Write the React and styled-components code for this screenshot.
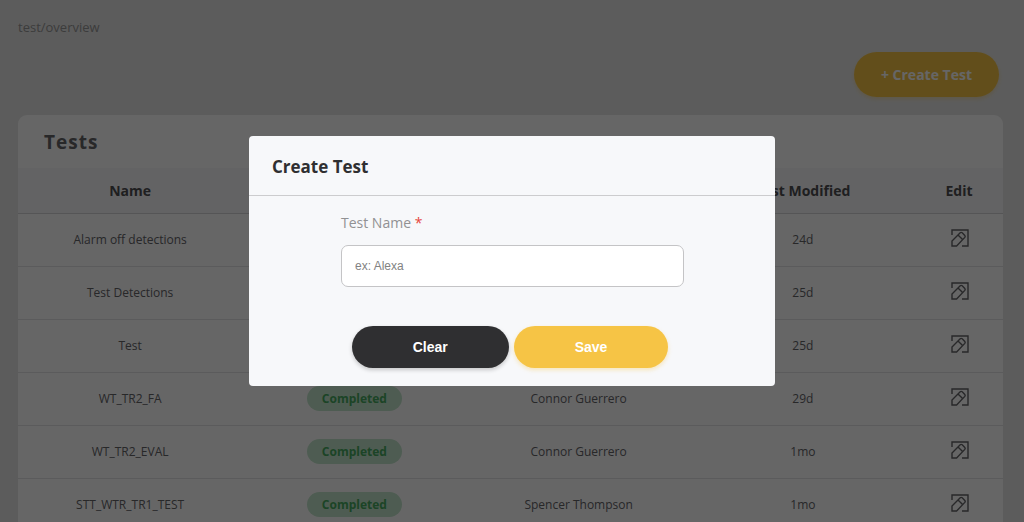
import React, { useState } from 'react'
import styled, { createGlobalStyle } from 'styled-components'

const GlobalStyle = createGlobalStyle`
    * {
        box-sizing: border-box;
    }
    body {
        margin: 0;
        overflow: hidden;
        background: rgb(231, 231, 231);
        font-family: "Open Sans", "Noto Sans", sans-serif;
        color: rgb(100, 100, 104);
    }
`
const Container = styled.div`
    min-height: 100vh;
    padding: 18px 21px 0 18px;
`
const Breadcrumb = styled.nav`
    font-size: 13px;
    line-height: 18px;
    color: rgb(150, 150, 150);
`
const Toolbar = styled.div`
    display: flex;
    justify-content: flex-end;
    padding: 16px 4px 18px;
`
const PillButton = styled.button`
    height: 42px;
    padding: 0 ${props => props.$pad || 61}px;
    border: none;
    border-radius: 24px;
    background: ${props => props.$dark ? '#2f2f31' : '#f6c445'};
    color: white;
    font-family: "Liberation Sans", Arial, sans-serif;
    font-size: 14px;
    font-weight: bold;
    box-shadow: 0 2px 4px ${props => props.$dark ? 'rgba(0, 0, 0, 0.2)' : 'rgba(246, 196, 69, 0.35)'};
    cursor: pointer;
`
const CreateButton = styled(PillButton)`
    height: 45px;
    font-family: "Open Sans", "Noto Sans", sans-serif;
`
const Card = styled.section`
    background: white;
    border-radius: 9px 9px 0 0;
    overflow: hidden;
`
const CardTitle = styled.h2`
    margin: 0;
    padding: 13px 26px 12px;
    font-size: 19px;
    line-height: 28px;
    letter-spacing: 1px;
`
const Table = styled.table`
    width: 100%;
    table-layout: fixed;
    border-collapse: collapse;
    text-align: center;
`
const HeadCell = styled.th`
    width: ${props => props.$width || 'auto'};
    height: 45px;
    padding: 0;
    background: rgb(248, 248, 250);
    border-bottom: 1px solid rgb(212, 212, 214);
    color: rgb(78, 78, 82);
    font-size: 14px;
`
const Cell = styled.td`
    height: 53px;
    padding: 0;
    border-bottom: 1px solid rgb(228, 228, 230);
    font-size: 12px;
`
const Status = styled.span`
    display: inline-block;
    padding: 0 15px;
    border-radius: 13px;
    background: rgb(195, 230, 205);
    color: rgb(70, 170, 95);
    font-weight: bold;
    line-height: 25px;
`
const IconButton = styled.button`
    display: inline-flex;
    padding: 0 0 3px 1px;
    border: none;
    background: none;
    color: inherit;
    cursor: pointer;
`
const Overlay = styled.div`
    position: fixed;
    inset: 0;
    display: flex;
    align-items: center;
    justify-content: center;
    background: rgba(0, 0, 0, 0.6);
`
const Modal = styled.form`
    width: 526px;
    max-width: 100%;
    background: rgb(247, 248, 250);
    border-radius: 4px;
`
const ModalTitle = styled.h3`
    margin: 0;
    padding: 18px 23px 15px;
    border-bottom: 1px solid rgb(204, 204, 206);
    color: #2f2f31;
    font-size: 17px;
    line-height: 26px;
`
const Field = styled.div`
    display: flex;
    flex-direction: column;
    gap: 11px;
    padding: 16px 91px 39px 92px;
`
const Label = styled.label`
    color: rgb(145, 145, 147);
    font-size: 14px;
    line-height: 22px;
    span {
        color: rgb(230, 70, 60);
    }
`
const Input = styled.input`
    width: 100%;
    height: 42px;
    padding: 0 13px;
    border: 1px solid rgb(196, 196, 198);
    border-radius: 7px;
    background: white;
    font-family: "Liberation Sans", Arial, sans-serif;
    font-size: 12px;
    &::placeholder {
        color: rgb(130, 130, 130);
    }
`
const Actions = styled.div`
    display: flex;
    justify-content: center;
    gap: 5px;
    padding: 0 4px 18px 0;
`

const tests = [
    { name: 'Alarm off detections', status: 'Completed', owner: 'Connor Guerrero', modified: '24d' },
    { name: 'Test Detections', status: 'Completed', owner: 'Connor Guerrero', modified: '25d' },
    { name: 'Test', status: 'Completed', owner: '', modified: '25d' },
    { name: 'WT_TR2_FA', status: 'Completed', owner: 'Connor Guerrero', modified: '29d' },
    { name: 'WT_TR2_EVAL', status: 'Completed', owner: 'Connor Guerrero', modified: '1mo' },
    { name: 'STT_WTR_TR1_TEST', status: 'Completed', owner: 'Spencer Thompson', modified: '1mo' },
]

const EditIcon = () => (
    <svg width="18" height="18" viewBox="0 0 18 18" fill="none" stroke="currentColor" strokeWidth="1.4">
        <path d="M1 6V1H17V17H11" />
        <path d="M1 17V12L9.2 3.8Q10.2 3 11.2 3.8L13.8 6.4Q14.6 7.4 13.8 8.4L5.6 17Z" />
        <path d="M7 6L11.6 10.6" />
    </svg>
)

const App = () => {
    const [name, setName] = useState('')

    const handleSubmit = (e) => {
        e.preventDefault()
    }

    return (
        <>
            <GlobalStyle />
            <Container>
                <Breadcrumb>test/overview</Breadcrumb>
                <Toolbar>
                    <CreateButton type="button" $pad={27}>+ Create Test</CreateButton>
                </Toolbar>
                <Card>
                    <CardTitle>Tests</CardTitle>
                    <Table>
                        <thead>
                            <tr>
                                <HeadCell>Name</HeadCell>
                                <HeadCell>Status</HeadCell>
                                <HeadCell>Created By</HeadCell>
                                <HeadCell>Last Modified</HeadCell>
                                <HeadCell $width="88px">Edit</HeadCell>
                            </tr>
                        </thead>
                        <tbody>
                            {tests.map((test) => (
                                <tr key={test.name}>
                                    <Cell>{test.name}</Cell>
                                    <Cell><Status>{test.status}</Status></Cell>
                                    <Cell>{test.owner}</Cell>
                                    <Cell>{test.modified}</Cell>
                                    <Cell>
                                        <IconButton type="button" aria-label={`Edit ${test.name}`}>
                                            <EditIcon />
                                        </IconButton>
                                    </Cell>
                                </tr>
                            ))}
                        </tbody>
                    </Table>
                </Card>
            </Container>
            <Overlay>
                <Modal onSubmit={handleSubmit}>
                    <ModalTitle>Create Test</ModalTitle>
                    <Field>
                        <Label htmlFor="testName">Test Name <span>*</span></Label>
                        <Input
                            id="testName"
                            placeholder="ex: Alexa"
                            value={name}
                            onChange={(e) => setName(e.target.value)}
                        />
                    </Field>
                    <Actions>
                        <PillButton type="button" $dark onClick={() => setName('')}>Clear</PillButton>
                        <PillButton type="submit">Save</PillButton>
                    </Actions>
                </Modal>
            </Overlay>
        </>
    )
}

export default App
